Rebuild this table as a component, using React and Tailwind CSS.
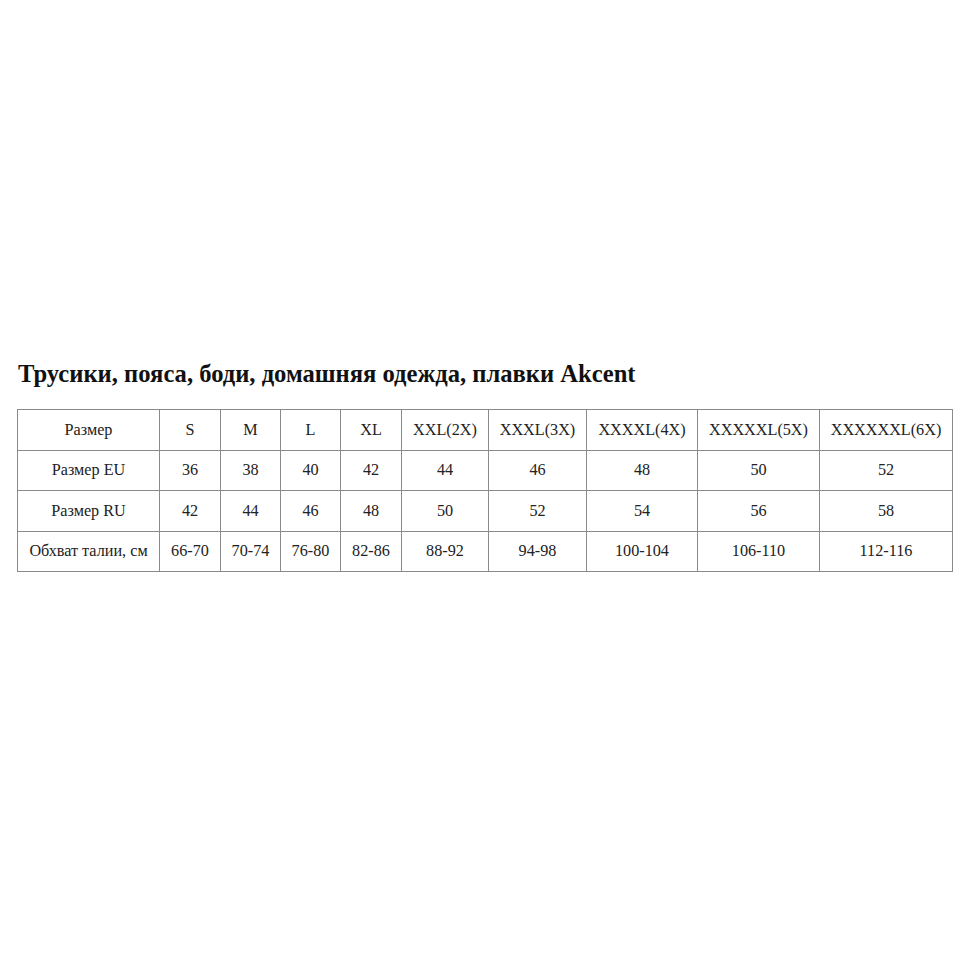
import React from "react";

const cols = [142, 61, 60, 60, 61, 87, 98, 111, 122, 133];
const rows = [
  ["Размер", "S", "M", "L", "XL", "XXL(2X)", "XXXL(3X)", "XXXXL(4X)", "XXXXXL(5X)", "XXXXXXL(6X)"],
  ["Размер EU", "36", "38", "40", "42", "44", "46", "48", "50", "52"],
  ["Размер RU", "42", "44", "46", "48", "50", "52", "54", "56", "58"],
  ["Обхват талии, см", "66-70", "70-74", "76-80", "82-86", "88-92", "94-98", "100-104", "106-110", "112-116"],
];

export default function App() {
  return (
    <div className="w-[970px] h-[970px] bg-white overflow-hidden" style={{ fontFamily: '"Liberation Serif", "Times New Roman", serif' }}>
      <div className="pt-[361px] pl-[18px]">
        <h1 className="text-[24.6px] font-bold leading-[26px] text-[#111]">
          Трусики, пояса, боди, домашняя одежда, плавки Akcent
        </h1>
      </div>
      <div className="pl-[17px] pt-[22px]">
        <table className="table-fixed border-collapse text-[16.2px] text-[#222]">
          <colgroup>
            {cols.map((w, i) => (
              <col key={i} style={{ width: w }} />
            ))}
          </colgroup>
          <tbody>
            {rows.map((r, i) => (
              <tr key={i} className="h-[40.5px]">
                {r.map((c, j) => (
                  <td key={j} className="border border-[#8a8a8a] text-center align-middle p-0 leading-none">
                    {c}
                  </td>
                ))}
              </tr>
            ))}
          </tbody>
        </table>
      </div>
    </div>
  );
}
